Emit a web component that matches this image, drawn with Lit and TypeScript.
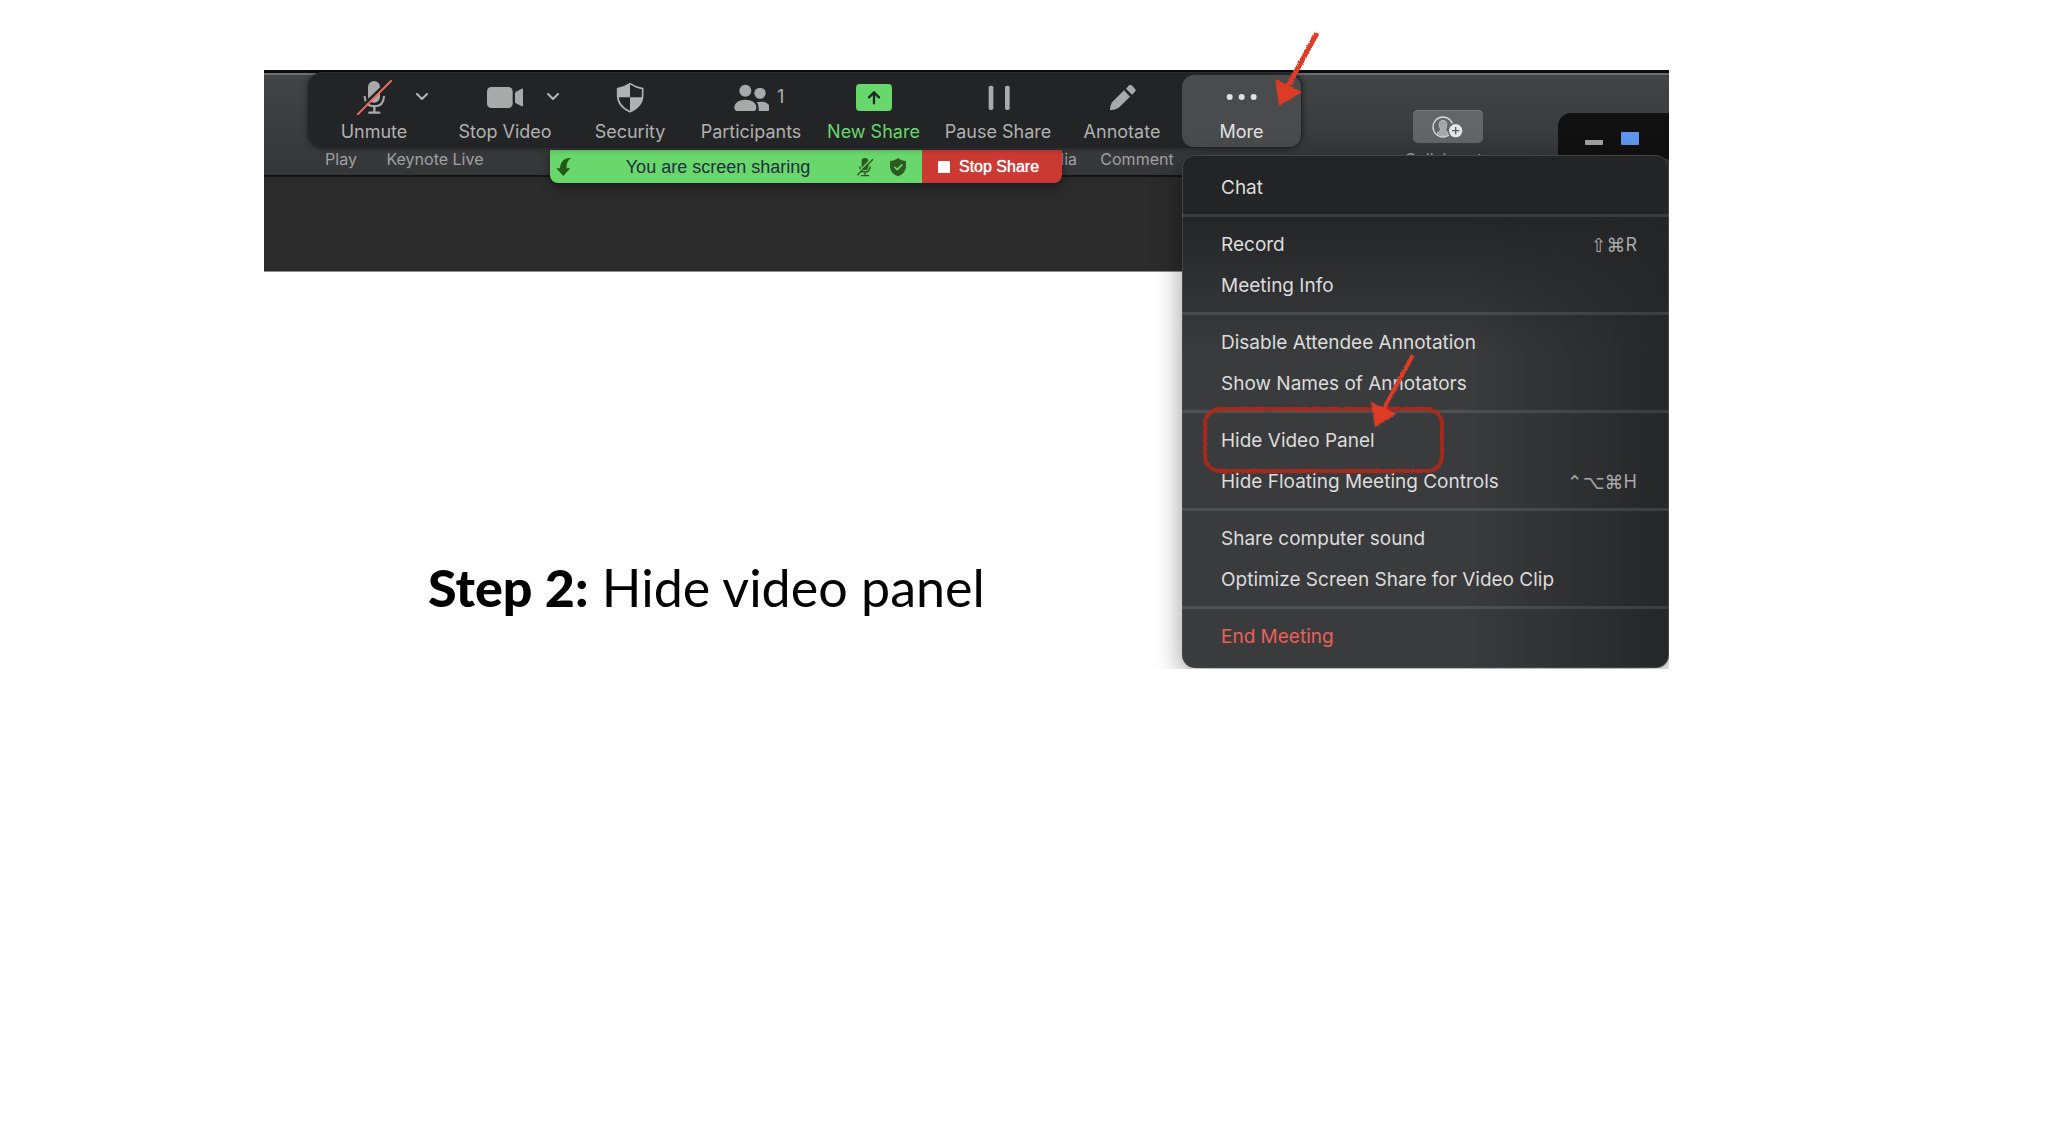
import { LitElement, html, svg, css, nothing, type TemplateResult } from "lit";
import { customElement, property } from "lit/decorators.js";

/* ---------- icon artwork ---------- */

const icon = (box: string, body: unknown) =>
  html`<svg class="icon" viewBox=${box} aria-hidden="true">${body}</svg>`;

const micIcon = icon("318 57 108 108", svg`
  <rect x="354" y="63" width="36" height="65" rx="18" fill="#a8a9a9"/>
  <path d="M344 110 C345 130 356 139 373 139 C390 139 401 130 402 110" fill="none" stroke="#a8a9a9" stroke-width="6" stroke-linecap="round"/>
  <path d="M373 139 V158 M358 158 H388" fill="none" stroke="#a8a9a9" stroke-width="7" stroke-linecap="round"/>
  <path d="M319 157 L419 59" stroke="#232426" stroke-width="8"/>
  <path d="M323 163 L423 63" stroke="#ee6a62" stroke-width="6" stroke-linecap="round"/>`);

const cameraIcon = icon("711 57 108 108", svg`
  <rect x="711" y="81" width="77" height="63" rx="13" fill="#a8a9a9"/>
  <path d="M795 100 Q795 97 798 95 L815 86 Q819 84 819 88 V136 Q819 141 815 139 L798 130 Q795 128 795 125 Z" fill="#a8a9a9"/>`);

const shieldIcon = icon("216 57 108 108", svg`
  <path d="M270 71 C258 79 246 84 233 86 V105 C233 132 249 146 270 155 C291 146 308 132 308 105 V86 C294 84 282 79 270 71 Z" fill="none" stroke="#b0b1b1" stroke-width="5" stroke-linejoin="round"/>
  <path d="M270 71 C258 79 246 84 233 86 V112 H270 Z M270 112 H307 C304 134 290 147 270 155 Z" fill="#b0b1b1"/>`);

const peopleIcon = icon("579 57 108 108", svg`
  <circle cx="616" cy="92" r="18" fill="#a8a9a9"/>
  <circle cx="660" cy="100" r="17" fill="#a8a9a9"/>
  <path d="M595 153 Q583 153 583 143 C583 127 598 119 616 119 C634 119 649 127 649 143 Q649 153 638 153 Z" fill="#a8a9a9"/>
  <path d="M656 153 C657 143 656 135 650 127 C668 121 690 129 690 144 Q690 153 680 153 Z" fill="#a8a9a9"/>`);

const shareIcon = icon("138 57 108 108", svg`
  <rect x="138" y="72" width="108" height="81" rx="11" fill="#67d86b"/>
  <path d="M192 130 V98 M177 112 L192 97 L207 112" fill="none" stroke="#1f2a20" stroke-width="7" stroke-linecap="round" stroke-linejoin="round"/>`);

const pauseIcon = icon("510 57 108 108", svg`
  <rect x="536" y="77" width="14" height="73" rx="5" fill="#a8a9a9"/>
  <rect x="585" y="77" width="14" height="73" rx="5" fill="#a8a9a9"/>`);

const pencilIcon = icon("882 57 108 108", svg`
  <path d="M900 151 Q900 137 906 127 L942 91 L960 110 L926 143 Q916 150 900 151 Z" fill="#a8a9a9"/>
  <path d="M948 86 L957 76 Q961 72 965 76 L975 86 Q980 91 975 95 L966 104 Z" fill="#a8a9a9"/>`);

const dotsIcon = icon("189 179 108 108", svg`
  <circle cx="206" cy="233" r="9" fill="#e2e2e2"/>
  <circle cx="242" cy="233" r="9" fill="#e2e2e2"/>
  <circle cx="278" cy="233" r="9" fill="#e2e2e2"/>`);

const chevronIcon = html`<svg class="chevron" viewBox="0 0 12 8" aria-hidden="true">
  <path d="M1 1 L6 6 L11 1" fill="none" stroke="#b4b5b5" stroke-width="2" stroke-linecap="round" stroke-linejoin="round"/>
</svg>`;

/* ---------- data ---------- */

interface Tool {
  id: string;
  label: string;
  art: TemplateResult;
  menu?: string;
  count?: number;
}

const TOOLS: Tool[] = [
  { id: "unmute", label: "Unmute", art: micIcon, menu: "Audio options" },
  { id: "video", label: "Stop Video", art: cameraIcon, menu: "Video options" },
  { id: "security", label: "Security", art: shieldIcon },
  { id: "people", label: "Participants", art: peopleIcon, count: 1 },
  { id: "share", label: "New Share", art: shareIcon },
  { id: "pause", label: "Pause Share", art: pauseIcon },
  { id: "annotate", label: "Annotate", art: pencilIcon },
];

interface Entry {
  label: string;
  symbols?: string;
  key?: string;
  danger?: boolean;
}

const MENU: Entry[][] = [
  [{ label: "Chat" }],
  [{ label: "Record", symbols: "⇧⌘", key: "R" }, { label: "Meeting Info" }],
  [{ label: "Disable Attendee Annotation" }, { label: "Show Names of Annotators" }],
  [{ label: "Hide Video Panel" }, { label: "Hide Floating Meeting Controls", symbols: "⌃⌥⌘", key: "H" }],
  [{ label: "Share computer sound" }, { label: "Optimize Screen Share for Video Clip" }],
  [{ label: "End Meeting", danger: true }],
];

const reset = css`
  * { box-sizing: border-box; }
  button {
    margin: 0;
    padding: 0;
    border: 0;
    background: none;
    color: inherit;
    font: inherit;
    cursor: pointer;
  }
`;

/* ---------- drop-down of the More button ---------- */

@customElement("more-menu")
export class MoreMenu extends LitElement {
  static styles = [reset, css`
    :host { display: block; }
    .menu {
      border-radius: 13px;
      overflow: hidden;
      padding: 5px 0;
      font: 400 19px/24px Inter, "Liberation Sans", sans-serif;
      color: #dcdcdc;
      background:
        linear-gradient(to right, rgba(38, 38, 38, 0) 58%, rgba(36, 37, 38, 0.9) 98%),
        linear-gradient(#222325, #242527 60px, #3a3b3d 200px);
      box-shadow: inset 0 0 0 1px #434446, 0 8px 28px rgba(0, 0, 0, 0.4);
    }
    .group { padding: 7px 0 6px; }
    .group + .group { border-top: 3px solid rgba(255, 255, 255, 0.11); }
    .entry {
      display: flex;
      align-items: center;
      justify-content: space-between;
      width: 100%;
      height: 41px;
      padding: 0 32px 0 39px;
      white-space: nowrap;
    }
    .danger { color: #e9605b; }
    .keys { display: flex; align-items: center; color: #a9a9a9; font-size: 18px; }
    .symbols { font: 19px/24px "DejaVu Sans", sans-serif; }
  `];

  render() {
    return html`<div class="menu" role="menu">
      ${MENU.map((group) => html`<div class="group" role="group">
        ${group.map((e) => html`<button class="entry ${e.danger ? "danger" : ""}" role="menuitem">
          <span>${e.label}</span>
          ${e.key ? html`<span class="keys"><span class="symbols">${e.symbols}</span>${e.key}</span>` : nothing}
        </button>`)}
      </div>`)}
    </div>`;
  }
}

/* ---------- floating meeting controls ---------- */

@customElement("meeting-toolbar")
export class MeetingToolbar extends LitElement {
  static styles = [reset, css`
    :host { display: block; font: 400 18px/24px Inter, "Liberation Sans", sans-serif; color: #b0b1b1; }
    .bar {
      display: flex;
      align-items: stretch;
      width: max-content;
      height: 77px;
      padding: 3px 2px 2px 9px;
      border-radius: 16px;
      background: #232426;
      box-shadow: inset 0 0 0 1px #2c2d2f, 0 0 6px rgba(0, 0, 0, 0.35);
    }
    .tool {
      display: grid;
      grid-template: 44px 26px / minmax(0, 1fr) 52px minmax(0, 1fr);
      align-items: center;
      white-space: nowrap;
    }
    .main { display: contents; }
    .art { grid-area: 1 / 2; display: flex; justify-content: center; }
    .label { grid-area: 2 / 1 / 3 / 4; justify-self: center; }
    .side { grid-area: 1 / 3; justify-self: start; display: flex; }
    .opener { padding: 6px 16px; }
    .icon { width: 36px; height: 36px; display: block; }
    .chevron { width: 12px; height: 8px; display: block; }
    .unmute { width: 116px; }
    .video { width: 146px; }
    .security { width: 104px; }
    .people { width: 138px; }
    .share { width: 107px; color: #67d86b; }
    .pause { width: 142px; }
    .annotate { width: 106px; }
    .more {
      position: relative;
      width: 119px;
      margin-left: 7px;
      border-radius: 12px;
      background: #4a4b4c;
      color: #e2e2e2;
    }
    more-menu { position: absolute; left: 0; top: 80px; width: 487px; }
  `];

  render() {
    return html`<div class="bar" role="toolbar" aria-label="Meeting controls">
      ${TOOLS.map((t) => html`<div class="tool ${t.id}">
        <button class="main"><span class="art">${t.art}</span><span class="label">${t.label}</span></button>
        ${t.menu ? html`<button class="side opener" aria-label=${t.menu}>${chevronIcon}</button>` : nothing}
        ${t.count ? html`<span class="side">${t.count}</span>` : nothing}
      </div>`)}
      <div class="tool more">
        <button class="main" aria-expanded="true"><span class="art">${dotsIcon}</span><span class="label">More</span></button>
        <more-menu></more-menu>
      </div>
    </div>`;
  }
}

/* ---------- green / red sharing strip ---------- */

@customElement("share-strip")
export class ShareStrip extends LitElement {
  @property() status = "You are screen sharing";

  static styles = [reset, css`
    :host { display: block; font: 400 18px/24px "Liberation Sans", Arial, sans-serif; }
    .strip {
      display: flex;
      width: max-content;
      height: 33px;
      border-radius: 0 0 8px 8px;
      overflow: hidden;
      box-shadow: 0 3px 10px rgba(0, 0, 0, 0.45);
    }
    .status {
      display: flex;
      align-items: center;
      gap: 8px;
      width: 372px;
      padding: 0 15px 0 6px;
      background: #69d76c;
      color: #1f3040;
    }
    .text { flex: 1; padding-left: 6px; text-align: center; }
    .down { width: 18px; height: 20px; }
    .marks { display: flex; gap: 15px; }
    .mark { width: 18px; height: 20px; }
    .stop {
      display: flex;
      align-items: center;
      gap: 9px;
      width: 140px;
      padding-left: 16px;
      background: #cb3a32;
      color: #fff;
      font-size: 16px;
      text-shadow: 0 0 1px #fff;
    }
    .square { width: 12px; height: 12px; border-radius: 1px; background: #fff; }
  `];

  render() {
    return html`<div class="strip">
      <div class="status">
        <svg class="down" viewBox="917 290 54 60" aria-hidden="true">
          <path d="M964 293 C943 291 930 303 929 324 L918 324 L939 347 L960 324 L949 324 C948 309 952 299 964 293 Z" fill="#245a14"/>
        </svg>
        <span class="text">${this.status}</span>
        <span class="marks">
          <svg class="mark" viewBox="138 290 54 60" aria-hidden="true">
            <rect x="155" y="293" width="20" height="37" rx="10" fill="#2c5a20"/>
            <path d="M149 318 C150 331 156 335 165 335 C174 335 180 331 181 318" fill="none" stroke="#2c5a20" stroke-width="4"/>
            <path d="M165 335 V345 M153 346 H177" stroke="#2c5a20" stroke-width="4"/>
            <path d="M139 342 L186 293" stroke="#69d76c" stroke-width="4"/>
            <path d="M142 345 L189 297" stroke="#2c5a20" stroke-width="4"/>
          </svg>
          <svg class="mark" viewBox="237 290 54 60" aria-hidden="true">
            <path d="M264 293 C257 299 248 302 240 302 V316 C240 333 250 342 264 348 C278 342 288 333 288 316 V302 C279 302 271 299 264 293 Z" fill="#2c5a20"/>
            <path d="M253 320 L262 328 L277 312" fill="none" stroke="#69d76c" stroke-width="5"/>
          </svg>
        </span>
      </div>
      <button class="stop"><span class="square"></span>Stop Share</button>
    </div>`;
  }
}

/* ---------- page ---------- */

@customElement("app-root")
export class AppRoot extends LitElement {
  static styles = [reset, css`
    :host { display: block; min-height: 100vh; background: #fff; }
    .page {
      display: grid;
      grid-template-columns: 264fr 1405fr 379fr;
      padding-top: 70px;
    }
    .stage { grid-column: 2; position: relative; min-width: 0; }
    .shot { position: relative; overflow: hidden; padding-bottom: 32px; }

    .titlebar {
      display: flex;
      align-items: flex-end;
      height: 107px;
      padding: 0 0 6px 61px;
      border-top: 3px solid #0b0b10;
      border-bottom: 2px solid #121212;
      background: linear-gradient(#6d6f70 2px, #434446 2px, #3a3b3d 60%, #353638);
      font: 400 16px/20px Inter, "Liberation Sans", sans-serif;
      color: #a0a1a2;
      white-space: nowrap;
    }
    .cluster { display: flex; gap: 29px; }
    .insert { gap: 22px; margin-left: 568px; }
    .people { margin-left: 228px; }
    .item { display: flex; flex-direction: column; align-items: center; gap: 6px; }
    .play { width: 32px; }
    .live { width: 98px; }
    .media { width: 25px; align-items: flex-end; }
    .comment { width: 76px; }
    .collab { width: 90px; }
    .chip {
      display: flex;
      align-items: center;
      justify-content: center;
      width: 70px;
      height: 33px;
      border-radius: 5px;
      background: #646567;
      box-shadow: inset 0 1px 0 #78797b;
    }
    .person { width: 32px; height: 24px; }
    .canvas { height: 95px; background: #2b2b2b; border-bottom: 1px solid #8b8b8b; }

    .slide { padding: 285px 0 20px 164px; }
    .heading {
      margin: 0;
      font: 400 52px/60px Lato, "Open Sans", sans-serif;
      color: #000;
    }
    .heading b { font-weight: 900; }

    .thumbs {
      position: absolute;
      top: 43px;
      left: 1294px;
      right: 0;
      height: 46px;
      display: flex;
      align-items: flex-end;
      gap: 18px;
      padding: 0 0 14px 27px;
      border-radius: 13px 0 0 0;
      background: #111;
    }
    .dash { width: 18px; height: 5px; border-radius: 1px; background: #a3a3a3; }
    .tile { width: 18px; height: 13px; border-radius: 1px; background: #6097f0; }
    share-strip { position: absolute; top: 80px; left: 286px; }
    meeting-toolbar { position: absolute; top: 2px; left: 43px; }

    .marks {
      position: absolute;
      top: 0;
      left: 0;
      width: 1405px;
      height: 599px;
      overflow: visible;
      pointer-events: none;
    }
  `];

  render() {
    return html`<main class="page">
      <div class="stage">
        <div class="shot">
          <div class="titlebar">
            <div class="cluster">
              <button class="item play">Play</button>
              <button class="item live">Keynote Live</button>
            </div>
            <div class="cluster insert">
              <button class="item media">dia</button>
              <button class="item comment">Comment</button>
            </div>
            <div class="cluster people">
              <button class="item collab">
                <span class="chip">
                  <svg class="person" viewBox="818 288 96 72" aria-hidden="true">
                    <circle cx="851" cy="324" r="30" fill="none" stroke="#d8d8d8" stroke-width="4"/>
                    <path d="M851 304 C839 304 838 316 841 325 C845 333 843 337 833 342 Q840 350 851 351 Q862 350 869 342 C859 337 857 333 861 325 C864 316 863 304 851 304 Z" fill="#a5a6a7" stroke="#d0d0d0" stroke-width="2"/>
                    <circle cx="889" cy="335" r="24" fill="#646567"/>
                    <circle cx="889" cy="335" r="20" fill="#e6e6e6"/>
                    <path d="M889 324 V346 M878 335 H900" stroke="#58595b" stroke-width="4"/>
                  </svg>
                </span>
                Collaborate
              </button>
            </div>
          </div>
          <div class="canvas"></div>
          <div class="slide"><h1 class="heading"><b>Step 2:</b> Hide video panel</h1></div>
          <div class="thumbs"><span class="dash"></span><span class="tile"></span></div>
          <share-strip></share-strip>
          <meeting-toolbar></meeting-toolbar>
        </div>
        <svg class="marks" viewBox="264 70 1405 599" aria-hidden="true">
          <defs>
            <filter id="chalk" x="-10%" y="-10%" width="120%" height="120%">
              <feTurbulence type="fractalNoise" baseFrequency="0.6" numOctaves="2" seed="4" result="n"/>
              <feDisplacementMap in="SourceGraphic" in2="n" scale="3" xChannelSelector="R" yChannelSelector="G"/>
            </filter>
          </defs>
          <g filter="url(#chalk)">
            <rect x="1205" y="409" width="237" height="62" rx="15" fill="none" stroke="#a52a1a" stroke-width="4"/>
            <path d="M1317 33 L1288 86" stroke="#dc3b26" stroke-width="5"/>
            <path d="M1275 79 L1302 92 L1279 106 Z" fill="#dc3b26"/>
            <path d="M1413 355 L1384 408" stroke="#dc3b26" stroke-width="4"/>
            <path d="M1371 402 L1397 414 L1375 427 Z" fill="#dc3b26"/>
          </g>
        </svg>
      </div>
    </main>`;
  }
}
